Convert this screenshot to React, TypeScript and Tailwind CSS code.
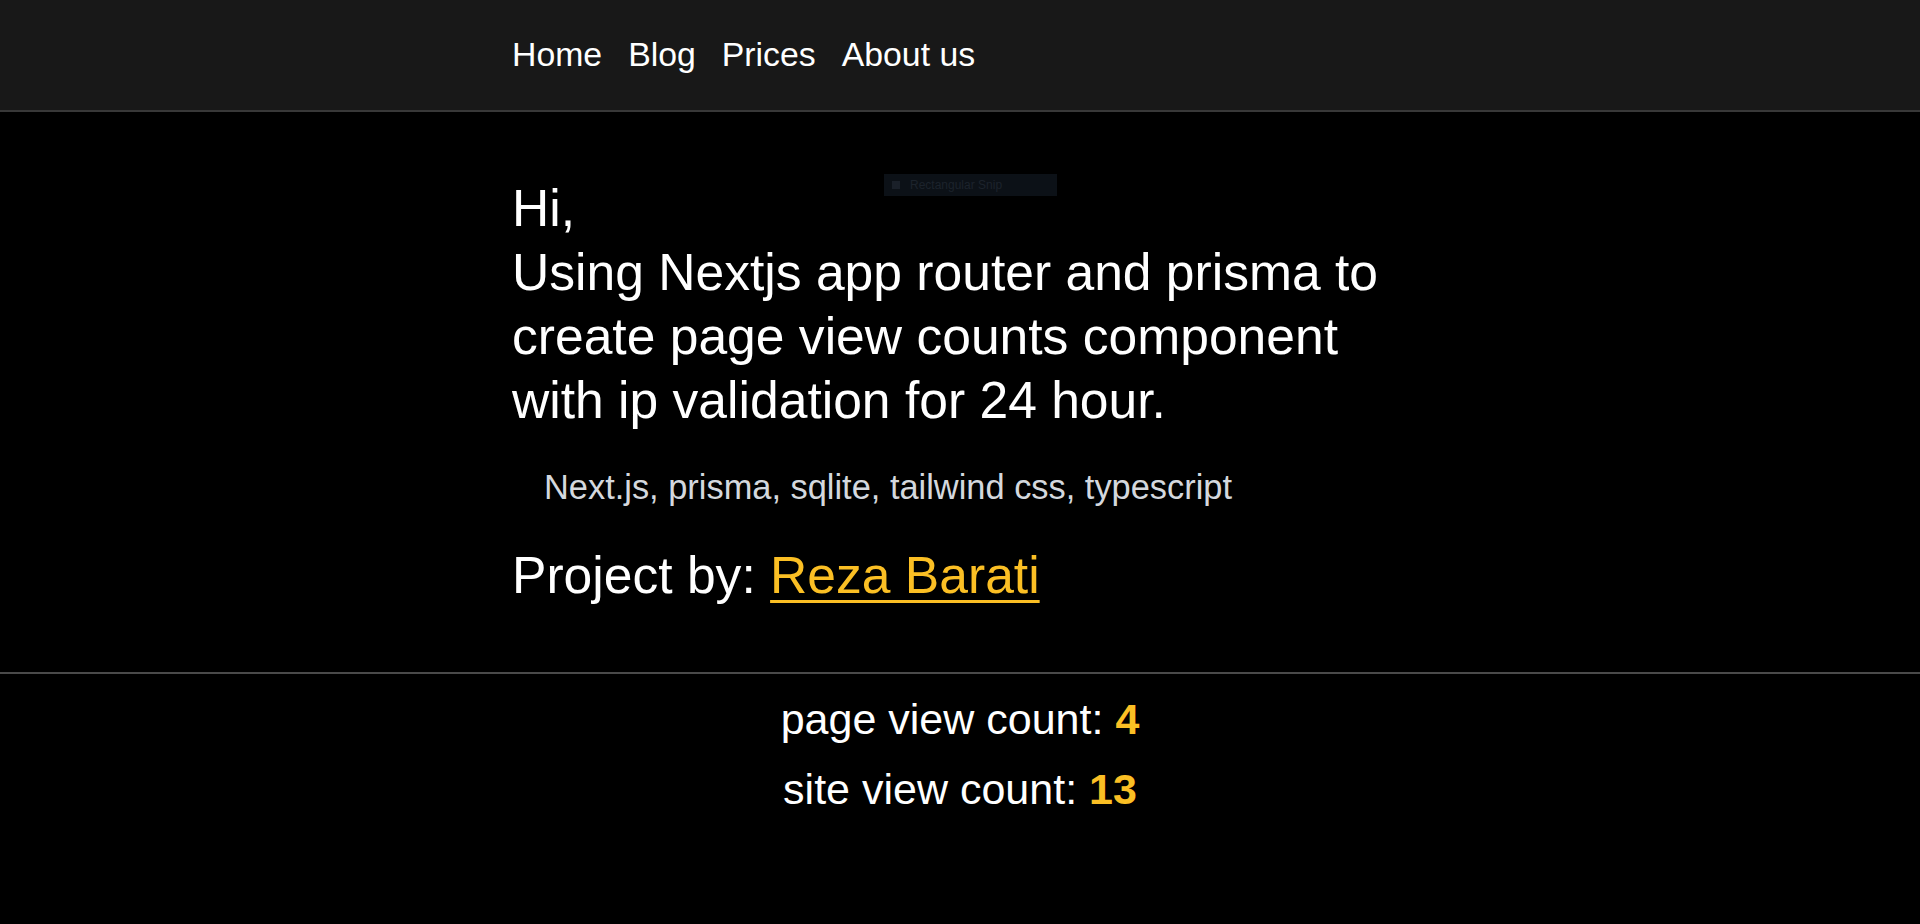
import React from 'react';

const links = ['Home', 'Blog', 'Prices', 'About us'];

function Header() {
  return (
    <header className="h-[112px] bg-[#181818] border-b-2 border-[#383838]">
      <nav className="max-w-4xl mx-auto pt-[34px] flex gap-[26px] text-[33.8px] leading-[40px]">
        {links.map((link) => (
          <a key={link} href="#" className="text-white hover:text-amber-400">
            {link}
          </a>
        ))}
      </nav>
    </header>
  );
}

function ViewCounts() {
  return (
    <footer className="border-t-2 border-[#4a4a4a] pt-[10px] text-center text-[43px] leading-[70px]">
      <p>
        page view count: <span className="font-bold text-[#fbbf24]">4</span>
      </p>
      <p>
        site view count: <span className="font-bold text-[#fbbf24]">13</span>
      </p>
    </footer>
  );
}

export default function App() {
  return (
    <div className="relative min-h-screen bg-black text-white font-['Liberation_Sans',Arial,sans-serif]">
      <Header />

      <main className="max-w-4xl mx-auto pt-[64px] pb-[65px]">
        <h1 className="text-[51.6px] leading-[64px] font-normal">
          Hi,
          <br />
          Using Nextjs app router and prisma to create page view counts component with ip validation for 24 hour.
        </h1>
        <p className="mt-[35px] pl-[32px] text-[34.4px] leading-[40px] text-[#d4d8de]">
          Next.js, prisma, sqlite, tailwind css, typescript
        </p>
        <p className="mt-[36px] text-[51.6px] leading-[64px]">
          Project by:{' '}
          <a href="#" className="text-[#fbbf24] underline underline-offset-[7px] decoration-[3px]">
            Reza Barati
          </a>
        </p>
      </main>

      <ViewCounts />

      {/* leftover snipping tool tooltip captured in the screenshot */}
      <div className="absolute left-[884px] top-[174px] w-[173px] h-[22px] bg-[#0c1117] flex items-center gap-[10px] px-[8px] text-[12px] text-[#1c232c]">
        <span className="w-[8px] h-[8px] bg-[#1a2029]" />
        <span>Rectangular Snip</span>
      </div>
    </div>
  );
}
